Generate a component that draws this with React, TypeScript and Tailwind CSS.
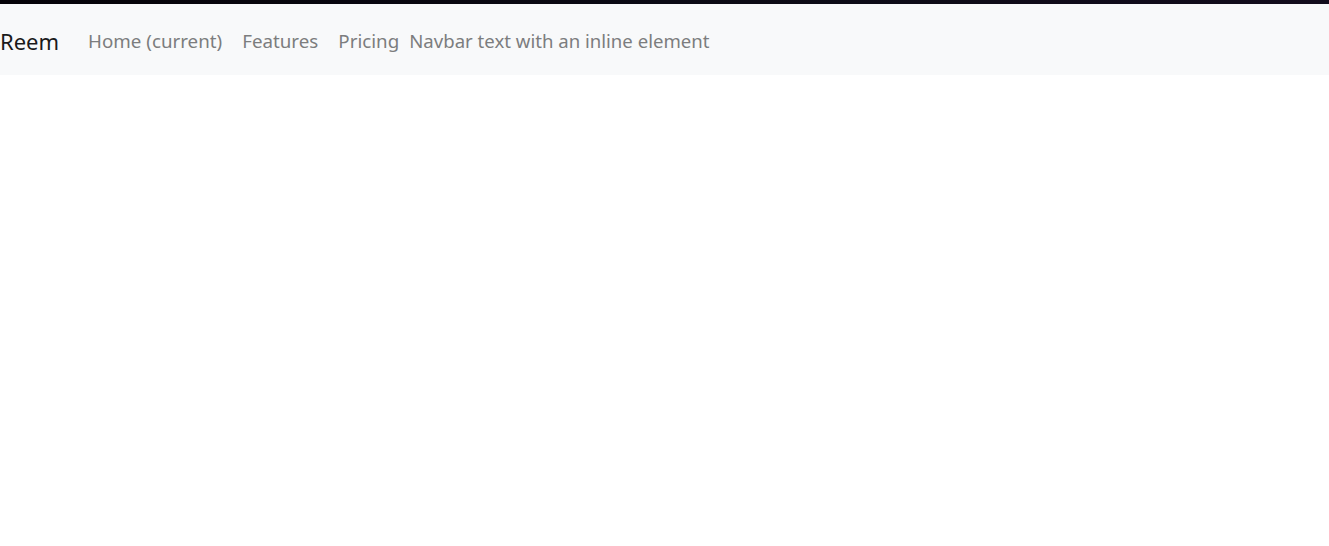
import React from "react";

const App = () => {
  const links = ["Home (current)", "Features", "Pricing"];

  return (
    <div className="min-h-[546px] bg-white font-['Noto_Sans',sans-serif]">
      {/* dark strip above the navbar */}
      <div className="h-[4px] bg-gradient-to-r from-[#050308] via-[#0b0a14] to-[#120c1c]"></div>

      <nav className="flex h-[71px] items-center bg-[#f8f9fa] pt-[3px]">
        <a className="mr-[19px] text-[22px] leading-none text-[#1a1a1a]">Reem</a>
        <ul className="flex items-center">
          {links.map((link) => (
            <li key={link}>
              <a className="block px-[10px] text-[18.75px] leading-none text-[#7c7d7e]">{link}</a>
            </li>
          ))}
        </ul>
        <span className="text-[18.6px] leading-none text-[#7c7d7e]">Navbar text with an inline element</span>
      </nav>
    </div>
  );
};

export default App;
